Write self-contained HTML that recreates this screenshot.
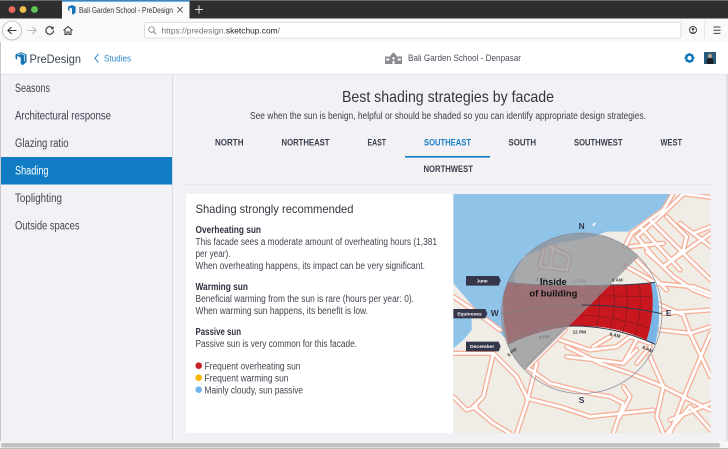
<!DOCTYPE html>
<html><head><meta charset="utf-8"><title>PreDesign</title>
<style>
html,body{margin:0;padding:0;background:#f1f1f6;width:728px;height:449px;overflow:hidden}
svg{display:block;position:absolute;left:0;top:0;filter:blur(.3px)}
text{font-family:"Liberation Sans",sans-serif;fill:#3a3f4c}
.p{font-size:10px;fill:#40444f}
.s{font-size:11.5px;fill:#3f4350}
.t{font-size:9.2px;font-weight:bold;fill:#3a3f4c}
.h{font-size:10px;font-weight:bold;fill:#2f3340}
</style></head><body>
<svg width="728" height="449" viewBox="0 0 728 449" xmlns="http://www.w3.org/2000/svg">
<defs>
<clipPath id="mapclip"><rect x="10" y="12" width="772" height="718"/></clipPath>
<clipPath id="circ"><circle cx="395" cy="370" r="241"/></clipPath>
<g id="roads" fill="none" stroke-linecap="round" stroke-linejoin="round">
<path d="M668 12L640 60 590 95 545 130 525 170"/>
<path d="M705 12L782 22"/>
<path d="M700 12L640 70 560 140 620 210 670 260 730 300 782 320"/>
<path d="M600 90L720 210 782 270"/>
<path d="M575 115L690 240"/>
<path d="M650 80L710 140 700 180 640 230 590 185"/>
<path d="M690 100L782 170"/>
<path d="M730 130L782 110"/>
<path d="M640 230L782 130"/>
<path d="M615 280L730 290 782 310"/>
<path d="M640 370L782 360"/>
<path d="M630 420L720 430 782 410"/>
<path d="M700 375L720 430 782 560"/>
<path d="M782 430L710 600 660 730"/>
<path d="M350 470L450 520 540 550 640 590 680 610 760 650 782 660"/>
<path d="M260 520L230 640 200 730"/>
<path d="M235 535L300 580 420 610 480 620 520 640 490 730"/>
<path d="M230 625L330 650 420 680 610 660"/>
<path d="M520 590L540 620 510 680"/>
<path d="M80 650L50 660 10 620"/>
<path d="M10 490L130 490 200 560 230 620"/>
<path d="M130 490L100 620 70 650 130 700 180 730"/>
<path d="M640 590L620 680 640 730"/>
<path d="M660 690L782 640"/>
<path d="M650 730L720 650 782 720"/>
<path d="M600 500L640 590"/>
<path d="M560 520L600 470"/>
<path d="M330 450L420 480 500 470 540 440 600 460"/>
<path d="M430 470L480 440"/>
<path d="M350 500L440 510 520 520 560 480"/>
<path d="M520 520L560 450"/>
<path d="M280 180L270 230 350 240 360 200 300 170"/>
<path d="M310 170L300 230"/>
<path d="M620 340L700 375"/>
<path d="M530 230L620 280"/>
<path d="M150 420L70 360 10 320"/>
<path d="M540 170L640 160"/>
<path d="M560 210L650 300"/>
<path d="M235 530L345 420"/>
</g>
</defs>

<!-- page background -->
<rect width="728" height="449" fill="#f1f1f6"/>
<rect x="0" y="74" width="172" height="375" fill="#f2f2f6"/>
<rect x="172" y="74" width="1" height="366" fill="#dcdce2"/>

<!-- browser tab bar -->
<rect width="728" height="18.5" fill="#2e2e31"/>
<rect width="728" height="1" fill="#6a6a6c"/>
<circle cx="12" cy="9.5" r="3.4" fill="#ed6a5e"/>
<circle cx="23" cy="9.5" r="3.4" fill="#f4bf4f"/>
<circle cx="34.5" cy="9.5" r="3.4" fill="#62c554"/>
<rect x="62" y="0.5" width="127.5" height="18" fill="#f9f9fa"/>
<rect x="62" y="0.5" width="127.5" height="1.2" fill="#2a9bf0"/>
<path d="M68 6.5l4-1.5 3.6 1.5v6l-2.4 2.2-1.2-1V8.5L69.5 7.5v3.6L68 10z" fill="#1a73b5"/>
<text x="79" y="13" font-size="7.8" textLength="94" lengthAdjust="spacingAndGlyphs" style="fill:#333">Bali Garden School - PreDesign</text>
<path d="M177.3 7l5.4 5.4M182.7 7l-5.4 5.4" stroke="#555" stroke-width=".9"/>
<path d="M199 5.5v8M195 9.5h8" stroke="#ddd" stroke-width="1"/>

<!-- toolbar -->
<rect y="18.5" width="728" height="23.5" fill="#f9f9fa"/>
<circle cx="12" cy="30.5" r="9.5" fill="#fff" stroke="#b9b9bb" stroke-width=".8"/>
<path d="M16.5 30.5h-8.5M11.5 27l-3.6 3.5 3.6 3.5" fill="none" stroke="#333" stroke-width="1.1"/>
<path d="M36 30.5h-8.5M32.5 27l3.6 3.5-3.6 3.5" fill="none" stroke="#b5b5b7" stroke-width="1.1"/>
<path d="M53.5 30.5a3.8 3.8 0 1 1-1.2-2.8" fill="none" stroke="#333" stroke-width="1.1"/>
<path d="M53.6 26.3v3h-3z" fill="#333"/>
<path d="M63.5 30.5l4.5-4 4.5 4M65 30v4.5h2v-2.5h2v2.5h2V30" fill="none" stroke="#333" stroke-width="1"/>
<rect x="144.5" y="22.5" width="536.5" height="15.5" rx="2" fill="#fff" stroke="#d6d6d8" stroke-width=".8"/>
<circle cx="151.5" cy="29.5" r="2.8" fill="none" stroke="#888" stroke-width=".9"/>
<path d="M153.6 31.6l2.6 2.6" stroke="#888" stroke-width="1"/>
<text x="161.5" y="33.5" font-size="8.4" textLength="118.5" lengthAdjust="spacingAndGlyphs" style="fill:#777">https://predesign.<tspan style="fill:#222">sketchup.com</tspan>/</text>
<circle cx="693" cy="30" r="3.5" fill="none" stroke="#444" stroke-width="1"/>
<circle cx="693" cy="29.2" r="1.3" fill="#444"/>
<path d="M690.8 32.5a2.6 2 0 0 1 4.4 0z" fill="#444"/>
<rect x="704" y="22" width=".8" height="16" fill="#e2e2e4"/>
<path d="M713.5 27h7M713.5 30.2h7M713.5 33.4h7" stroke="#444" stroke-width="1"/>

<!-- app header -->
<rect y="42" width="728" height="32" fill="#fff"/>
<rect y="74" width="728" height="1" fill="#e4e4e9"/>
<path d="M15.5 54.5l5.5-2.4 5.5 2.4v7.5l-4 3.2-1.8-1.5v-6.2l-3.5-1.6v4l-1.7-1.4z" fill="#1777b5"/>
<path d="M18 54.8l3-1.2 3.5 1.5v6" fill="none" stroke="#fff" stroke-width=".7"/>
<text x="29.5" y="63" font-size="12" textLength="51.5" lengthAdjust="spacingAndGlyphs" style="fill:#3c4554">PreDesign</text>
<path d="M98.5 54l-3.6 4.2 3.6 4.2" fill="none" stroke="#2a86c8" stroke-width="1"/>
<text x="104" y="61.5" font-size="9.2" textLength="27" lengthAdjust="spacingAndGlyphs" style="fill:#2a86c8">Studies</text>
<g fill="#8a8a8f">
<path d="M385 56.5h5.5v7.5h-5.5zM396.5 56.5h5.5v7.5h-5.5z"/>
<path d="M390.5 55.5l3-3.2 3 3.2v8.5h-6z"/>
</g>
<path d="M386.2 58.5h3.2v2h-3.2zM397.6 58.5h3.2v2h-3.2zM392.5 57h2v2.5h-2zM392.5 61h2v3h-2z" fill="#fff"/>
<text x="408" y="61.2" font-size="8.8" textLength="113" lengthAdjust="spacingAndGlyphs" style="fill:#4a4e5a">Bali Garden School - Denpasar</text>
<circle cx="689.5" cy="58" r="3.3" fill="none" stroke="#0a72b5" stroke-width="2.2"/>
<path d="M689.5 53v2M689.5 61v2M684.5 58h2M692.5 58h2M686 54.5l1.4 1.4M691.6 60.1l1.4 1.4M686 61.5l1.4-1.4M691.6 55.9l1.4-1.4" stroke="#0a72b5" stroke-width="1.6"/>
<rect x="704" y="52" width="12" height="12" fill="#2a5a7c"/>
<circle cx="710" cy="56" r="2.1" fill="#b9a08c"/>
<path d="M706.8 64v-3.5c0-1.5 1.3-2.3 3.2-2.3s3.2 .8 3.2 2.3V64z" fill="#1b1b22"/>

<!-- sidebar -->
<text class="s" x="15" y="92" textLength="35" lengthAdjust="spacingAndGlyphs">Seasons</text>
<text class="s" x="15" y="119.3" textLength="96" lengthAdjust="spacingAndGlyphs">Architectural response</text>
<text class="s" x="15" y="147" textLength="53.5" lengthAdjust="spacingAndGlyphs">Glazing ratio</text>
<rect y="157" width="172" height="27.5" fill="#0f7cc3"/>
<text class="s" x="15" y="174.5" textLength="33.5" lengthAdjust="spacingAndGlyphs" style="fill:#fff">Shading</text>
<text class="s" x="15" y="202" textLength="47" lengthAdjust="spacingAndGlyphs">Toplighting</text>
<text class="s" x="15" y="229.5" textLength="64.5" lengthAdjust="spacingAndGlyphs">Outside spaces</text>

<!-- heading -->
<text x="342" y="102" font-size="16" textLength="212" lengthAdjust="spacingAndGlyphs" style="fill:#33363f">Best shading strategies by facade</text>
<text x="250" y="119" font-size="9.8" textLength="396" lengthAdjust="spacingAndGlyphs" style="fill:#3c3f4a">See when the sun is benign, helpful or should be shaded so you can identify appropriate design strategies.</text>

<!-- tabs -->
<text class="t" x="215" y="145.3" textLength="28.5" lengthAdjust="spacingAndGlyphs">NORTH</text>
<text class="t" x="281.5" y="145.3" textLength="48" lengthAdjust="spacingAndGlyphs">NORTHEAST</text>
<text class="t" x="367.5" y="145.3" textLength="18.5" lengthAdjust="spacingAndGlyphs">EAST</text>
<text class="t" x="424" y="145.3" textLength="47" lengthAdjust="spacingAndGlyphs" style="fill:#1a7fc4">SOUTHEAST</text>
<text class="t" x="508.5" y="145.3" textLength="27.5" lengthAdjust="spacingAndGlyphs">SOUTH</text>
<text class="t" x="574" y="145.3" textLength="48.5" lengthAdjust="spacingAndGlyphs">SOUTHWEST</text>
<text class="t" x="660.5" y="145.3" textLength="21.5" lengthAdjust="spacingAndGlyphs">WEST</text>
<rect x="405" y="156" width="85" height="1.6" fill="#0f7cc3"/>
<text class="t" x="423.5" y="172" textLength="49.5" lengthAdjust="spacingAndGlyphs">NORTHWEST</text>
<rect x="186" y="184.3" width="525" height=".8" fill="#e3e3e8"/>

<!-- text card -->
<rect x="186" y="194" width="267" height="239" fill="#fff"/>
<text x="195.5" y="213" font-size="11.6" textLength="158" lengthAdjust="spacingAndGlyphs" style="fill:#33363f;font-weight:500">Shading strongly recommended</text>
<text class="h" x="195.5" y="233" textLength="65.5" lengthAdjust="spacingAndGlyphs">Overheating sun</text>
<text class="p" x="195.5" y="245" textLength="241.5" lengthAdjust="spacingAndGlyphs">This facade sees a moderate amount of overheating hours (1,381</text>
<text class="p" x="195.5" y="257" textLength="35" lengthAdjust="spacingAndGlyphs">per year).</text>
<text class="p" x="195.5" y="269" textLength="229.5" lengthAdjust="spacingAndGlyphs">When overheating happens, its impact can be very significant.</text>
<text class="h" x="195.5" y="290" textLength="52.5" lengthAdjust="spacingAndGlyphs">Warming sun</text>
<text class="p" x="195.5" y="302" textLength="218.5" lengthAdjust="spacingAndGlyphs">Beneficial warming from the sun is rare (hours per year: 0).</text>
<text class="p" x="195.5" y="314" textLength="172.5" lengthAdjust="spacingAndGlyphs">When warming sun happens, its benefit is low.</text>
<text class="h" x="195.5" y="335" textLength="45.5" lengthAdjust="spacingAndGlyphs">Passive sun</text>
<text class="p" x="195.5" y="347" textLength="161.5" lengthAdjust="spacingAndGlyphs">Passive sun is very common for this facade.</text>
<circle cx="198.7" cy="365.7" r="3.3" fill="#c9202a"/>
<text class="p" x="204.5" y="369.3" textLength="96" lengthAdjust="spacingAndGlyphs">Frequent overheating sun</text>
<circle cx="198.7" cy="377.7" r="3.3" fill="#f7b500"/>
<text class="p" x="204.5" y="381.3" textLength="84" lengthAdjust="spacingAndGlyphs">Frequent warming sun</text>
<circle cx="198.7" cy="389.7" r="3.3" fill="#6fb4e8"/>
<text class="p" x="204.5" y="393.3" textLength="98.5" lengthAdjust="spacingAndGlyphs">Mainly cloudy, sun passive</text>

<!-- map (coords in 3x crop space) -->
<g transform="translate(450 190) scale(.33333)">
<g clip-path="url(#mapclip)">
<rect x="10" y="12" width="772" height="718" fill="#f0ede6"/>
<path d="M10 12H668L640 50 590 85 535 125 470 125 430 140 320 160 220 200 190 260 205 300 185 400 190 455 160 440 120 395 70 350 10 280Z" fill="#8fc3e8"/>
<path d="M10 385H65V420L40 450 10 475Z" fill="#8fc3e8"/>
<path d="M430 100l8-4-4 10-8 2z" fill="#fff"/>
<use href="#roads" stroke="#f5b09a" stroke-width="16"/>
<use href="#roads" stroke="#fff" stroke-width="8"/>
</g>
<g clip-path="url(#circ)">
<!-- sun path -->
<path d="M603 280L615 277Q640 370 615 463L590 450Q615 360 603 280Z" fill="#76b5e6"/>
<path d="M165 277Q390 298 603 280Q618 360 590 450Q390 360 175 463Q150 370 165 277Z" fill="#c8171f"/>
<g fill="none" stroke="#7d1a22" stroke-width="2">
<path d="M445 285Q455 345 440 410M490 283Q500 350 480 418M528 282Q540 350 518 428M568 281Q578 360 555 438"/>
<path d="M200 285Q205 370 225 430M250 290Q250 350 260 420M300 290Q300 350 310 415"/>
<path d="M165 320Q395 315 606 320M170 395Q395 345 600 415"/>
</g>
<!-- shaded half -->
<path d="M765 0L0 765 0 0Z" fill="#8f9095" fill-opacity=".74"/>
<g fill="none" stroke="#34384a" stroke-width="3">
<path d="M480 285Q550 285 615 277"/>
<path d="M357 408Q490 405 615 463"/>
<path d="M395 345Q520 345 640 372"/>
</g>
<g fill="none" stroke="#7b7c85" stroke-width="2.5">
<path d="M165 277Q320 292 480 285"/>
<path d="M357 408Q260 405 175 463"/>
<path d="M150 372Q280 345 395 345"/>
</g>
</g>
<circle cx="395" cy="370" r="241" fill="none" stroke="#8a8f9c" stroke-width="2.2"/>
<g font-weight="bold" font-size="14" text-anchor="middle">
<text x="388" y="277" style="fill:#8f8f95">12 PM</text>
<text x="502" y="275" style="fill:#444">9 AM</text>
<text x="274" y="273" style="fill:#7d7d83">3 PM</text>
<text x="388" y="431" style="fill:#333">12 PM</text>
<text x="494" y="440" transform="rotate(14 494 440)" style="fill:#333">9 AM</text>
<text x="591" y="482" transform="rotate(25 591 482)" style="fill:#333">6 AM</text>
<text x="283" y="446" transform="rotate(-8 283 446)" style="fill:#7d7d83">3 PM</text>
<text x="189" y="490" transform="rotate(-40 189 490)" style="fill:#444">6 PM</text>
</g>
<g font-weight="bold" font-size="28">
<text x="270" y="285" textLength="80" lengthAdjust="spacingAndGlyphs" style="fill:#111">Inside</text>
<text x="238" y="319" textLength="144" lengthAdjust="spacingAndGlyphs" style="fill:#111">of building</text>
</g>
<g font-weight="bold" font-size="25" text-anchor="middle">
<text x="395" y="117" style="fill:#34384a">N</text>
<text x="134" y="378" style="fill:#34384a">W</text>
<text x="656" y="378" style="fill:#34384a">E</text>
<text x="395" y="639" style="fill:#34384a">S</text>
</g>
<path d="M48 258H146L152 272 146 287H48Z" fill="#35364a"/>
<path d="M10 357H106L112 371 106 385H10Z" fill="#35364a"/>
<path d="M48 455H146L152 469 146 484H48Z" fill="#35364a"/>
<g font-weight="bold" font-size="14">
<text x="80" y="277" textLength="33" lengthAdjust="spacingAndGlyphs" style="fill:#fff">June</text>
<text x="22" y="376" textLength="73" lengthAdjust="spacingAndGlyphs" style="fill:#fff">Equinoxes</text>
<text x="60" y="474" textLength="73" lengthAdjust="spacingAndGlyphs" style="fill:#fff">December</text>
</g>
</g>

<!-- window scrollbars -->
<rect x="0" y="42" width="1" height="407" fill="#c9c9cc"/>
<rect x="726" y="74" width="2" height="368" fill="#e0e0e4"/>
<rect x="0" y="441" width="728" height="8" fill="#f5f5f7"/>
<rect x="1" y="443" width="719" height="4.5" rx="2" fill="#c3c3c5"/>
<rect x="0" y="448" width="728" height="1" fill="#bdbdbf"/>
</svg>
</body></html>
